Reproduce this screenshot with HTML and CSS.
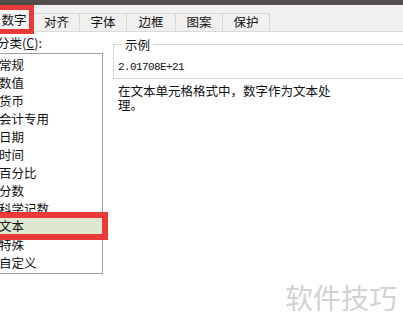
FILE: index.html
```html
<!DOCTYPE html>
<html lang="zh-CN">
<head>
    <meta charset="UTF-8">
    <title>设置单元格格式</title>
    <link rel="stylesheet" href="styles.css">
</head>
<body>
    <div class="topbar"></div>
    <div class="tabs">
        <div class="tab tab-active">数字</div>
        <div class="tab tab-first">对齐</div>
        <div class="tab">字体</div>
        <div class="tab tab-wide">边框</div>
        <div class="tab">图案</div>
        <div class="tab">保护</div>
    </div>
    <div class="panel">
        <div class="category">
            <div class="category-label">分类(<u>C</u>):</div>
            <div class="listbox">
                <div class="item">常规</div>
                <div class="item">数值</div>
                <div class="item">货币</div>
                <div class="item">会计专用</div>
                <div class="item">日期</div>
                <div class="item">时间</div>
                <div class="item">百分比</div>
                <div class="item">分数</div>
                <div class="item">科学记数</div>
                <div class="item item-selected">文本</div>
                <div class="item">特殊</div>
                <div class="item">自定义</div>
            </div>
        </div>
        <div class="detail">
            <div class="group">
                <div class="group-title">示例</div>
                <div class="sample">2.01708E+21</div>
            </div>
            <div class="description">在文本单元格格式中，数字作为文本处<br>理。</div>
        </div>
    </div>
    <div class="watermark">软件技巧</div>
</body>
</html>
```

FILE: styles.css
```css
body {
    margin: 0;
    width: 403px;
    height: 325px;
    overflow: hidden;
    background: #ffffff;
    color: #111111;
    font-family: "Noto Sans CJK SC", "Liberation Sans", sans-serif;
    font-size: 12.5px;
    position: relative;
}

.topbar {
    height: 5px;
    background: #524d4a;
}

.tabs {
    display: flex;
    align-items: flex-end;
    height: 26px;
    margin-left: -6px;
    background: #f0f0f0;
    border-bottom: 1px solid #dadada;
}

.tab {
    box-sizing: border-box;
    width: 48px;
    height: 18px;
    line-height: 16px;
    text-align: center;
    border: 1px solid #d6d6d6;
    border-bottom: none;
    margin-left: -1px;
    background: #f0f0f0;
}

.tab-first {
    width: 47px;
}

.tab-wide {
    width: 50px;
}

.tab-active {
    position: relative;
    z-index: 1;
    width: 40px;
    height: 29px;
    line-height: 19px;
    margin-left: 0;
    margin-bottom: -3px;
    border: 5px solid #ec3a3a;
    background: #f7f7f7;
}

.panel {
    display: flex;
    margin-left: -3px;
}

.category {
    width: 106px;
    flex-shrink: 0;
}

.category-label {
    height: 21px;
    line-height: 14px;
    padding-top: 4px;
    box-sizing: border-box;
}

.listbox {
    box-sizing: border-box;
    width: 106px;
    height: 221px;
    padding-top: 2px;
    border: 1px solid #9f9f9f;
}

.item {
    height: 18px;
    line-height: 18px;
    padding-left: 1px;
}

.item-selected {
    height: 16px;
    line-height: 16px;
    margin-bottom: 2px;
    background: #dee8d1;
    outline: 6px solid #ec3a3a;
}

.detail {
    flex: 1;
    padding-left: 10px;
    padding-top: 12px;
}

.group {
    height: 33px;
    border: 1px solid #d8d8d8;
    border-right: none;
    padding-left: 4px;
}

.group-title {
    width: fit-content;
    margin-top: -8px;
    margin-left: 4px;
    padding: 0 3px;
    line-height: 16px;
    background: #ffffff;
}

.sample {
    font-family: "Liberation Mono", monospace;
    font-size: 11px;
    letter-spacing: -0.6px;
    line-height: 14px;
    margin-top: 7px;
}

.description {
    margin-top: 5px;
    padding-left: 5px;
    line-height: 14px;
}

.watermark {
    position: absolute;
    left: 285px;
    top: 277px;
    font-size: 28px;
    color: #d2d2d2;
}
```
